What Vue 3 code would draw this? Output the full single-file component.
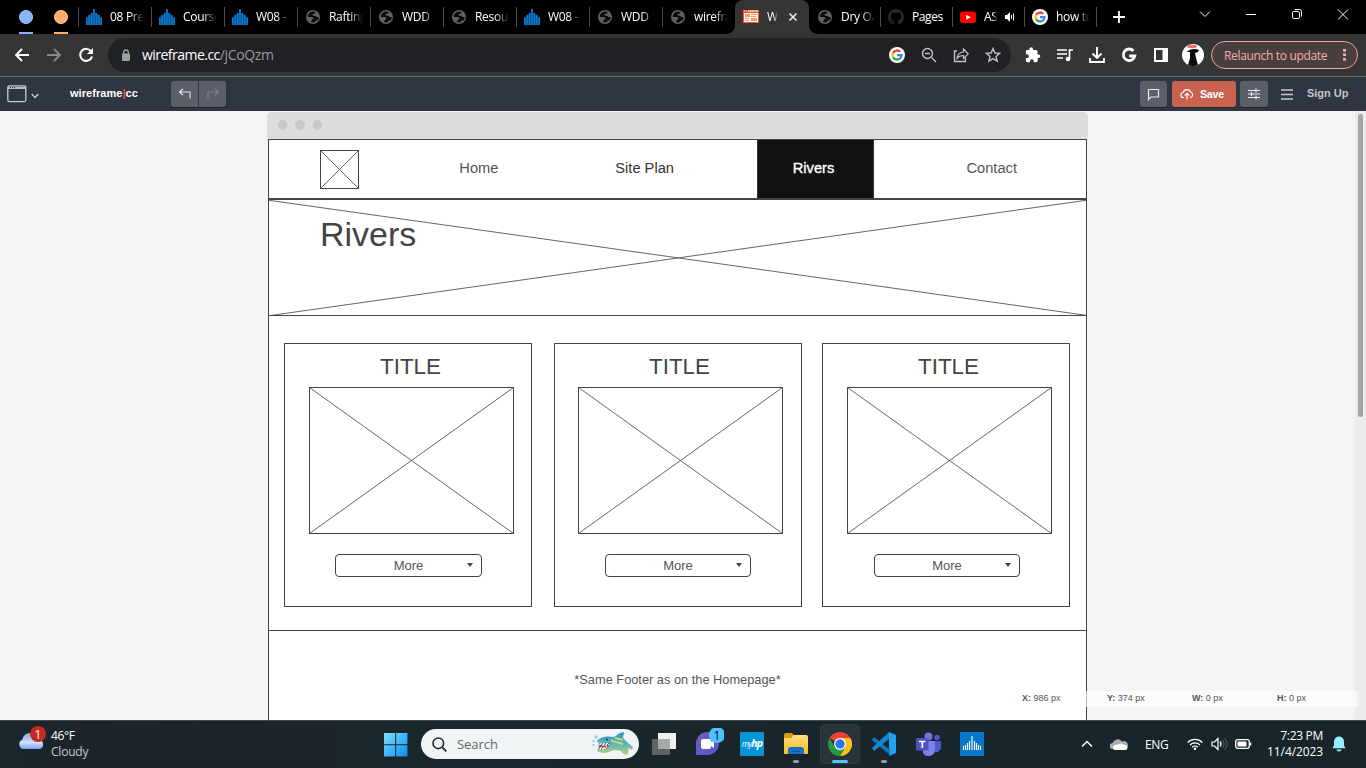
<script setup>
const tabs = [
  { icon: 'bars', text: '08 Prep', w: 73 },
  { icon: 'bars', text: 'Course', w: 73 },
  { icon: 'bars', text: 'W08 - T', w: 73 },
  { icon: 'globe', text: 'Rafting', w: 73 },
  { icon: 'globe', text: 'WDD 1', w: 73 },
  { icon: 'globe', text: 'Resour', w: 73 },
  { icon: 'bars', text: 'W08 - T', w: 73 },
  { icon: 'globe', text: 'WDD 1', w: 73 },
  { icon: 'globe', text: 'wirefra', w: 73 },
  { icon: 'wire', text: 'Wi', w: 74, active: true },
  { icon: 'globe', text: 'Dry Oa', w: 71, first: true },
  { icon: 'github', text: 'Pages', w: 72 },
  { icon: 'youtube', text: 'ASM', w: 72, audio: true },
  { icon: 'google', text: 'how to', w: 72 },
]
const cards = [
  { cls: 'c1' },
  { cls: 'c2' },
  { cls: 'c3' },
]
const readout = [
  ['X:', '986 px'],
  ['Y:', '374 px'],
  ['W:', '0 px'],
  ['H:', '0 px'],
]
</script>

<template>
  <div class="screen">
    <svg class="defs" width="0" height="0">
      <symbol id="google" viewBox="0 0 16 16">
        <circle cx="8" cy="8" r="8" fill="#fff" />
        <g fill="none" stroke-width="2.3">
          <path d="M4.1 5.8A4.5 4.5 0 0 1 11.2 4.8" stroke="#ea4335" />
          <path d="M4.1 10.2a4.5 4.5 0 0 1 0-4.4" stroke="#fbbc05" />
          <path d="M11 11.4a4.5 4.5 0 0 1-6.9-1.2" stroke="#34a853" />
          <path d="M8 8.2h4.5a4.6 4.6 0 0 1-1.6 3.3" stroke="#4285f4" />
        </g>
      </symbol>
      <symbol id="globe" viewBox="0 0 16 16">
        <circle cx="8" cy="8" r="7" fill="#5f6368" />
        <path d="M8.6 2.4c-2.3-.2-4.4 1.1-5.3 3.1-.4.9-.5 1.7-.4 2.6h3.6c1.3 0 2 .9 2 2H7.200v1.300H5.500c.4 1.300 1.400 2 2.600 2.100 1.500 0 2.400-.8 2.700-1.900l1.800-.1c.8-1 1.100-2.200 1-3.500h-2.200l-1.200-1.300H7.800V4.800h1.700c.6 0 .9-.4.9-1V2.900z" fill="#0a0a0a" />
        <path d="M4.2 9.500 6.300 11.600" stroke="#5f6368" />
      </symbol>
      <symbol id="bars" viewBox="0 0 16 16">
        <path d="M0 16V8.500h1.500V7H3V5.500h2V4h2V0h2v4h2v1.500h2V7h1.500v1.500H16V16z" fill="#064b80" />
        <path d="M.7 16V8.500M3.100 16V6M5.600 16V4M8 16V0M10.400 16V4M12.900 16V6M15.300 16V8.500" stroke="#0a7bd0" stroke-width="1.500" />
      </symbol>
    </svg>

    <!-- tab strip -->
    <div class="tabstrip">
      <div class="pinned"><i class="blue"></i><i class="orange"></i></div>
      <div v-for="(t, i) in tabs" :key="i" class="tab" :class="{ active: t.active, first: t.first }" :style="{ width: t.w + 'px' }">
        <svg v-if="t.icon === 'bars'" width="16" height="16"><use href="#bars" /></svg>
        <svg v-else-if="t.icon === 'globe'" width="16" height="16"><use href="#globe" /></svg>
        <svg v-else-if="t.icon === 'google'" width="16" height="16"><use href="#google" /></svg>
        <svg v-else-if="t.icon === 'wire'" width="16" height="16" viewBox="0 0 16 16">
          <path d="M0 1h16v13H0z" fill="#f4581f" />
          <path d="M1 2h1M3 2h1M5 2h10" stroke="#fff" />
          <path d="M1 4h14v9H1z" fill="#fff3ec" />
          <path d="M2 5h5v3H2zM8 5h6v1H8zM8 7h5v1H8zM2 9h4v1H2zM2 11h4v1H2zM8 9h6v3H8z" fill="#f79b75" />
        </svg>
        <svg v-else-if="t.icon === 'github'" width="16" height="16" viewBox="0 0 16 16">
          <path fill="#24292f" d="M8 0C3.580 0 0 3.580 0 8c0 3.540 2.290 6.530 5.470 7.590.4.070.55-.17.55-.38v-1.490c-2.010.37-2.530-.49-2.690-.94-.09-.23-.48-.94-.82-1.130-.28-.15-.68-.52-.01-.53.63-.01 1.080.58 1.230.82.72 1.210 1.870.87 2.330.66.070-.52.280-.87.510-1.070-1.780-.2-3.640-.89-3.640-3.950 0-.87.310-1.590.82-2.150-.08-.2-.36-1.020.08-2.120 0 0 .67-.21 2.200.82a7.600 7.600 0 0 1 4 0c1.530-1.040 2.200-.82 2.200-.82.44 1.100.16 1.920.08 2.120.51.56.82 1.270.82 2.150 0 3.070-1.870 3.750-3.650 3.950.29.25.54.73.54 1.480v2.200c0 .21.15.46.55.38A8 8 0 0 0 16 8c0-4.420-3.580-8-8-8z" />
        </svg>
        <svg v-else width="16" height="16" viewBox="0 0 16 16">
          <rect y="2.500" width="16" height="11.500" rx="3" fill="#f00" /><path d="m6.200 5.800 4.600 2.500-4.600 2.500z" fill="#fff" />
        </svg>
        <span class="tabtext">{{ t.text }}</span>
        <svg v-if="t.active" class="close" width="10" height="10" viewBox="0 0 10 10"><path d="m1.500 1.500 7 7m0-7-7 7" stroke="#e8eaed" stroke-width="1.600" /></svg>
        <svg v-if="t.audio" class="audio" width="12" height="12" viewBox="0 0 12 12"><path d="M1 4h2l3-3v10L3 8H1z" fill="#fff" /><path d="M7.500 4v4M9.500 2.500v7" stroke="#eee" fill="none" /></svg>
      </div>
      <svg class="plus" width="14" height="14" viewBox="0 0 14 14"><path d="M7 1v12M1 7h12" stroke="#fff" stroke-width="1.800" /></svg>
      <div class="winctl">
        <svg width="46" height="28" viewBox="0 0 46 28"><path d="m18 11.500 5 5 5-5" /></svg>
        <svg width="46" height="28" viewBox="0 0 46 28"><path d="M18 14.500h10" /></svg>
        <svg width="46" height="28" viewBox="0 0 46 28"><rect x="18.500" y="11.500" width="7" height="7" rx="1.300" /><path d="M20.500 9.500h5a2 2 0 0 1 2 2v5" /></svg>
        <svg width="46" height="28" viewBox="0 0 46 28"><path d="m18 9.500 10 10m0-10-10 10" /></svg>
      </div>
    </div>

    <!-- browser toolbar -->
    <div class="toolbar">
      <div class="navbtns">
        <svg width="32" height="32" viewBox="0 0 32 32"><path d="M23 16H10m6-6-6 6 6 6" stroke="#fff" stroke-width="1.900" fill="none" /></svg>
        <svg width="32" height="32" viewBox="0 0 32 32"><path d="M9 16h13m-6-6 6 6-6 6" stroke="#8a8a8a" stroke-width="1.800" fill="none" /></svg>
        <svg width="32" height="32" viewBox="0 0 32 32"><path d="M21.200 12.500A6 6 0 1 0 22 17.500" stroke="#fff" stroke-width="2" fill="none" /><path d="M23 9v6h-6z" fill="#fff" /></svg>
      </div>
      <div class="omnibox">
        <svg class="lock" width="10" height="13" viewBox="0 0 10 13"><rect x="1" y="4.500" width="8" height="7.500" rx="1" fill="#9aa0a6" /><path d="M2.700 5V3.300a2.300 2.300 0 0 1 4.600 0V5" fill="none" stroke="#9aa0a6" stroke-width="1.300" /></svg>
        <span class="url">wireframe.cc<em>/jCoQzm</em></span>
        <svg width="32" height="32" viewBox="0 0 32 32"><use href="#google" x="8" y="8" width="16" height="16" /></svg>
        <svg class="thin" width="32" height="32" viewBox="0 0 32 32"><circle cx="14.500" cy="14.500" r="5" /><path d="m18.500 18.500 4.500 4.500M12 14.500h5" /></svg>
        <svg class="thin" width="32" height="32" viewBox="0 0 32 32"><path d="M12 12H9.500v10.500h11v-4" /><path d="M18.500 10v3c-4 .2-6 2.500-6.500 6.500 1.700-2.200 3.500-3 6.500-3v3l4.700-4.700z" stroke-width="1.200" /></svg>
        <svg class="thin" width="32" height="32" viewBox="0 0 32 32"><path d="m16 9.600 1.900 4.400 4.700.4-3.600 3.100 1.100 4.600-4.100-2.500-4.100 2.500 1.100-4.600-3.600-3.100 4.700-.4z" /></svg>
      </div>
      <div class="exts">
        <svg width="32" height="32" viewBox="0 0 32 32"><path fill="#fff" d="M21.500 15.500h-1V12.500c0-.8-.6-1.400-1.400-1.400H16v-1a1.800 1.800 0 0 0-3.600 0v1H10.300c-.8 0-1.400.6-1.400 1.400v2.800h1a1.900 1.900 0 0 1 0 3.800h-1v2.700c0 .8.600 1.400 1.400 1.400H13v-1a1.900 1.900 0 0 1 3.800 0v1h2.500c.8 0 1.400-.6 1.400-1.400v-2.700h.8a1.800 1.800 0 0 0 0-3.600z" /></svg>
        <svg width="32" height="32" viewBox="0 0 32 32"><path d="M8 11h10M8 15h10M8 19h6M20.500 20V11H24" stroke="#fff" stroke-width="1.700" fill="none" /><circle cx="19" cy="20" r="2.300" fill="#fff" /></svg>
        <svg width="32" height="32" viewBox="0 0 32 32"><path d="M16 8v11m-4.500-4.500L16 19l4.500-4.500M9 19v4h14v-4" stroke="#fff" stroke-width="1.900" fill="none" /></svg>
        <svg width="32" height="32" viewBox="0 0 32 32"><path d="M20.500 12A5.800 5.800 0 1 0 21.800 17H16.200" stroke="#fff" stroke-width="2.800" fill="none" /></svg>
        <svg width="32" height="32" viewBox="0 0 32 32"><path d="M9 9h14v14H9zM11 11v10h6.500V11z" fill="#fff" fill-rule="evenodd" /></svg>
        <svg width="32" height="32" viewBox="0 0 32 32"><circle cx="16" cy="16" r="11" fill="#fff" /><ellipse cx="15" cy="7.500" rx="5" ry="1.700" fill="#df7171" /><path d="M10 13c2-3 8-4 12-2l-1 2-3 1 1 5 2 7c-3 1.500-7 1.500-10 0l2-7V13z" fill="#080a0c" /></svg>
      </div>
      <div class="relaunch"><span>Relaunch to update</span><b></b></div>
    </div>

    <!-- application bar -->
    <div class="appbar">
      <svg class="winicon" width="20" height="18" viewBox="0 0 20 18"><rect x=".8" y=".8" width="18" height="15.800" rx="1.500" fill="none" stroke="#c9ccd0" stroke-width="1.300" /><path d="M1 3h18" stroke="#b9bcc1" stroke-width="2" /><path d="M3 2.500h1m1 0h1m1 0h1" stroke="#3b4049" /></svg>
      <svg class="chev" width="8" height="6" viewBox="0 0 8 6"><path d="m.7 1 3.300 3.500L7.300 1" fill="none" stroke="#c9ccd0" stroke-width="1.300" /></svg>
      <div class="brand">wireframe<i>|</i>cc</div>
      <div class="btn undo"><svg width="14" height="12" viewBox="0 0 14 12"><path d="M5 1 1.500 4 5 7M1.500 4H12v6.500" fill="none" stroke="#e4e5e7" stroke-width="1.200" /></svg></div>
      <div class="btn redo"><svg width="14" height="12" viewBox="0 0 14 12"><path d="m9 1 3.500 3L9 7M12.500 4H2v6.500" fill="none" stroke="#7d828b" stroke-width="1.200" /></svg></div>
      <div class="btn comment"><svg width="13" height="13" viewBox="0 0 13 13"><path d="M1.500 11.500v-10h10v7.500H4z" fill="none" stroke="#e8e8e8" stroke-width="1.200" /></svg></div>
      <div class="btn save"><svg width="14" height="12" viewBox="0 0 14 12"><path d="M4 9.500H3.500a2.500 2.500 0 0 1-.3-5 4 4 0 0 1 7.600-.2 2.700 2.700 0 0 1-.3 5.200H10M7 11.500V5.500m-2.200 2L7 5.300l2.200 2.200" fill="none" stroke="#fff" stroke-width="1.100" /></svg><span>Save</span></div>
      <div class="btn tune"><svg width="12" height="12" viewBox="0 0 12 12"><path d="M0 2.500h12M0 6h12M0 9.500h12M8 .5v4M3.500 4v4M8 7.500v4" stroke="#eee" stroke-width="1.200" /></svg></div>
      <svg class="menu" width="12" height="11" viewBox="0 0 12 11"><path d="M0 1h12M0 5.500h12M0 10h12" stroke="#c9ccd0" stroke-width="1.300" /></svg>
      <span class="signup">Sign Up</span>
    </div>

    <!-- canvas -->
    <div class="canvas">
      <div class="frame">
        <div class="frametop"><i></i><i></i><i></i></div>
        <div class="page">
          <div class="sitenav">
            <svg class="logo" width="39" height="39" viewBox="0 0 39 39"><rect x=".5" y=".5" width="38" height="38" /><path d="m.5.5 38 38m0-38-38 38" /></svg>
            <span class="n1">Home</span>
            <span class="n2">Site Plan</span>
            <span class="n3">Rivers</span>
            <span class="n4">Contact</span>
          </div>
          <div class="hero">
            <svg width="817" height="115" viewBox="0 0 817 115" class="cross"><path d="M0 .3 817 115.300M0 115.700 817 .3" /></svg>
            <h1>Rivers</h1>
          </div>
          <div class="cards">
            <div v-for="c in cards" :key="c.cls" class="card" :class="c.cls">
              <h2>TITLE</h2>
              <svg width="205" height="147" viewBox="0 0 205 147"><rect x=".5" y=".5" width="204" height="146" /><path d="m.5.5 204 146m0-146-204 146" /></svg>
              <div class="more">More<i></i></div>
            </div>
          </div>
          <div class="footer">*Same Footer as on the Homepage*</div>
        </div>
      </div>
      <div class="track"><div class="thumb"></div></div>
      <div class="readout"><span v-for="r in readout" :key="r[0]"><b>{{ r[0] }}</b> {{ r[1] }}</span></div>
    </div>

    <!-- taskbar -->
    <div class="taskbar">
      <div class="weather">
        <svg width="30" height="30" viewBox="0 0 30 30">
          <defs><linearGradient id="cl" x2="0" y2="1"><stop stop-color="#7ea7e8" /><stop offset=".6" stop-color="#d0e1fb" /><stop offset="1" stop-color="#7aa4ee" /></linearGradient></defs>
          <path d="M5 24a5 5 0 0 1-.5-9.500 7.500 7.500 0 0 1 13-4 7 7 0 0 1 4 4.500 4.600 4.600 0 0 1 0 9z" fill="url(#cl)" />
          <circle cx="20" cy="9" r="8" fill="#c42b1c" />
          <text x="20" y="13.500" text-anchor="middle" font-size="12" fill="#fff">1</text>
        </svg>
        <div class="wtext"><div>46°F</div><div class="dim">Cloudy</div></div>
      </div>
      <svg class="start" width="24" height="24" viewBox="0 0 24 24">
        <defs><linearGradient id="win" x2="1" y2="1"><stop stop-color="#7fe0ff" /><stop offset="1" stop-color="#078cf5" /></linearGradient></defs>
        <path d="M0 0h11.200v11.200H0zM12.200 0h11.200v11.200H12.200zM0 12.200h11.200v11.200H0zM12.200 12.200h11.200v11.200H12.200z" fill="url(#win)" />
      </svg>
      <div class="search">
        <svg width="15" height="15" viewBox="0 0 15 15"><circle cx="6.300" cy="6.300" r="5.300" fill="none" stroke="#252a2e" stroke-width="1.600" /><path d="m10.300 10.300 4 4" stroke="#252a2e" stroke-width="1.900" /></svg>
        <span>Search</span>
        <svg class="fish" width="42" height="24" viewBox="0 0 42 24">
          <defs><linearGradient id="fi" x2="0" y2="1"><stop stop-color="#2e94b5" /><stop offset=".5" stop-color="#55b5bb" /><stop offset="1" stop-color="#c5cf75" /></linearGradient></defs>
          <path d="M5 9c4-5 11-5 17-4l6-4 4-1-1 6c2 2 3 3 4 4 2 2 4 3 6 5l-1 3-4-2c1 3 0 5-1 7-2-1-5-1-6-4l-7-1c-6 3-10 4-15 2l-2-1 2-6z" fill="url(#fi)" />
          <path d="M6 10c3 2 8 2 12 1-1 5-6 8-10 6z" fill="#8a4579" />
          <path d="m6 10 2 3 1-2 2 3 1-3 2 3 1-3 2 2M8 18l1-3 2 3 1-3 1 2 2-3" fill="none" stroke="#fff4d8" />
          <path d="M19 8c4 3 8 2 12 4M23 6l8 2" stroke="#c8d772" stroke-width="2" fill="none" />
          <circle cx="15" cy="7.500" r="1" fill="#173b61" /><circle cx="4" cy="5" r="1.800" fill="#9ad6df" /><circle cx="1.500" cy="9" r="1" fill="#79c7db" /><circle cx="1.500" cy="13" r="1" fill="#79c7db" />
        </svg>
      </div>
      <div class="apps">
        <div class="app"><svg width="24" height="24" viewBox="0 0 24 24"><path d="M6 1h18v16H6z" fill="#f0f0f0" /><path d="M0 7h18v16H0z" fill="#606263" /><path d="M6 7h12v10H6z" fill="#a8a9aa" /></svg></div>
        <div class="app"><svg width="32" height="32" viewBox="0 0 32 32"><defs><linearGradient id="ch" x2="1" y2="1"><stop stop-color="#775ab8" /><stop offset="1" stop-color="#5358c7" /></linearGradient></defs><path d="M4 27V16a11.500 11.500 0 1 1 11.500 11z" fill="url(#ch)" /><rect x="9" y="11" width="10" height="10" rx="2" fill="#fff" /><path d="m19 14 3-2v8l-3-2z" fill="#fff" /><circle cx="25" cy="7" r="8" fill="#4cc2ff" /><text x="25" y="11.500" text-anchor="middle" font-size="12" fill="#112">1</text></svg></div>
        <div class="app"><div class="hp">my<b>hp</b></div></div>
        <div class="app"><svg width="24" height="24" viewBox="0 0 24 24"><defs><linearGradient id="fo" x2="0" y2="1"><stop stop-color="#ffe07a" /><stop offset="1" stop-color="#f9bd23" /></linearGradient></defs><path d="M0 3a2 2 0 0 1 2-2h6l3 3v5H0z" fill="#d99a0c" /><path d="M0 6h7l3-3h12a2 2 0 0 1 2 2v17H0z" fill="url(#fo)" /><path d="M4 22v-4a3 3 0 0 1 3-3h10a3 3 0 0 1 3 3v4z" fill="#1473c8" /><path d="M8 19h8v1H8z" fill="#09549b" /></svg><u></u></div>
        <div class="app on"><svg width="24" height="24" viewBox="0 0 24 24"><path d="M12 12 1.600 6A12 12 0 0 1 22.400 6z" fill="#ea4335" /><path d="M12 12V6h10.400A12 12 0 0 1 12 24l5.200-9z" fill="#fbc116" /><path d="M12 24A12 12 0 0 1 1.600 6l5.200 9 5.200 3 5.200-3z" fill="#279a48" /><circle cx="12" cy="12" r="6" fill="#fff" /><circle cx="12" cy="12" r="4.700" fill="#2577ef" /></svg><u></u></div>
        <div class="app"><svg width="24" height="24" viewBox="0 0 24 24"><path d="m17 0 7 3v18l-7 3z" fill="#23a2ef" /><path d="m2 5 16 13v5L0 8z" fill="#087abd" /><path d="m0 16 17-16v7L2 19z" fill="#1287cf" /></svg><u></u></div>
        <div class="app"><svg width="26" height="24" viewBox="0 0 26 24"><circle cx="13.500" cy="4.500" r="4" fill="#7176dc" /><circle cx="22" cy="5.500" r="2.800" fill="#5059c9" /><path d="M17 9h9v7a5 5 0 0 1-6 4z" fill="#5059c9" /><path d="M8 9h12v8a6.500 6.500 0 0 1-12 4z" fill="#7b83eb" /><rect x="1" y="6" width="12.500" height="12.500" rx="1" fill="#4b53bc" /><path d="M4 9.500h6.500M7.300 9v7" stroke="#fff" stroke-width="1.700" /></svg></div>
        <div class="app"><svg width="24" height="24" viewBox="0 0 24 24"><path d="M0 0h24v24H0z" fill="#0876c9" /><path d="M3.500 18v-4M5.500 18v-5M7.500 18v-7M9.500 18v-9M12 18V4M14.500 18v-9M16.500 18v-7M18.500 18v-5M20.500 18v-4" stroke="#fff" stroke-width="1.150" /></svg></div>
      </div>
      <div class="tray">
        <svg class="up" width="12" height="8" viewBox="0 0 12 8"><path d="m1 6.500 5-5 5 5" fill="none" stroke="#fff" stroke-width="1.500" /></svg>
        <svg class="cloud" width="18" height="11" viewBox="0 0 18 11"><path d="M3 10a3 3 0 0 1-.5-6A5.500 5.500 0 0 1 12 2.500 4 4 0 0 1 15.500 10z" fill="#a9adb0" /><path d="M4 11a3 3 0 0 1 1-5l6-1.500 4 1.500a2.500 2.500 0 0 1 0 5z" fill="#fff" /></svg>
        <span class="eng">ENG</span>
        <svg class="wifi" width="16" height="12" viewBox="0 0 16 12"><g fill="none" stroke="#fff" stroke-width="1.200"><path d="M.7 4.500a10.300 10.300 0 0 1 14.600 0M3 7a7 7 0 0 1 10 0M5.200 9.200a4 4 0 0 1 5.600 0" /></g><circle cx="8" cy="10.700" r="1.300" fill="#fff" /></svg>
        <svg class="vol" width="17" height="14" viewBox="0 0 17 14"><path d="M1 5h2.500L7 1.500v11L3.500 9H1z" fill="none" stroke="#fff" stroke-width="1.200" /><path d="M9 4.500c1.300 1.500 1.300 3.500 0 5" stroke="#fff" stroke-width="1.200" fill="none" /><path d="M11.500 3c2 2.500 2 5.500 0 8M13.700 1.500c3 3.500 3 7.500 0 11" stroke="#5d686e" fill="none" /></svg>
        <svg class="bat" width="17" height="10" viewBox="0 0 17 10"><rect x=".7" y=".7" width="13.600" height="8.600" rx="2" fill="none" stroke="#fff" stroke-width="1.300" /><rect x="2.500" y="2.500" width="9" height="5" rx=".6" fill="#fff" /><path d="M15.500 3.500v3" stroke="#fff" stroke-width="1.500" /></svg>
        <div class="clock"><div>7:23 PM</div><div class="date">11/4/2023</div></div>
        <svg class="bell" width="14" height="16" viewBox="0 0 14 16"><path d="M7 .5a5 5 0 0 1 5 5v4l1.700 2.700H.3L2 9.500v-4a5 5 0 0 1 5-5zM4.500 13.500h5a2.500 2 0 0 1-5 0z" fill="#99ebff" /></svg>
      </div>
    </div>
  </div>
</template>

<style>
body { margin: 0; overflow: hidden; }
</style>

<style scoped>
.screen { width: 1366px; height: 768px; display: flex; flex-direction: column; overflow: hidden; font-family: "Open Sans", "Noto Sans", sans-serif; }
.screen * { box-sizing: border-box; }
svg { display: block; flex: none; }
.defs { position: absolute; }
.tabstrip { height: 34px; display: flex; flex: none; background: linear-gradient(#4a4a4a, #4a4a4a) 1096px 7px / 1px 20px no-repeat #000; }
.pinned { width: 78px; display: flex; padding-left: 19px; gap: 21px; padding-top: 10px; flex: none; }
.pinned i { width: 14px; height: 24px; background: radial-gradient(circle at 7px 7px, #8ab4f8 6.700px, transparent 7.200px), linear-gradient(#8ab4f8, #8ab4f8) 0 22px / 14px 2px no-repeat; }
.pinned .orange { background: radial-gradient(circle at 7px 7px, #fcad70 6.700px, transparent 7.200px), linear-gradient(#fcad70, #fcad70) 0 22px / 14px 2px no-repeat; }
.tab { height: 34px; display: flex; align-items: center; padding-left: 8px; flex: none; background: linear-gradient(#4a4a4a, #4a4a4a) 0 7px / 1px 20px no-repeat; }
.tab.active { background: #353535; border-radius: 8px 8px 0 0; position: relative; }
.tab.active::before, .tab.active::after { content: ""; position: absolute; bottom: 0; width: 8px; height: 8px; left: -8px; background: radial-gradient(circle at 0 0, transparent 7.500px, #353535 8px); }
.tab.active::after { left: auto; right: -8px; background: radial-gradient(circle at 100% 0, transparent 7.500px, #353535 8px); }
.tab.first { background: none; }
.tabtext { margin-left: 8px; width: 34px; overflow: hidden; white-space: nowrap; color: #fff; font-size: 12px; letter-spacing: -.3px; line-height: 20px; -webkit-mask-image: linear-gradient(90deg, #000 60%, transparent 100%); mask-image: linear-gradient(90deg, #000 60%, transparent 100%); }
.tab:nth-child(13) .tabtext { -webkit-mask-image: none; mask-image: none; letter-spacing: -.4px; }
.tab.active .tabtext { width: 11px; }
.tab:nth-child(14) .tabtext { width: 14px; }
.close { margin-left: 10px; }
.audio { margin-left: 6px; }
.plus { margin: 10px 0 0 16px; }
.winctl { display: flex; margin-left: auto; }
.winctl svg { fill: none; stroke: #fff; stroke-width: 1; }

.toolbar { height: 43px; background: #353535; border-bottom: 1px solid #6a6a6a; display: flex; flex: none; align-items: center; }
.navbtns, .exts { display: flex; }
.navbtns { margin-left: 6px; }
.omnibox { width: 903px; height: 34px; border-radius: 17px; background: #202124; margin-left: 6px; display: flex; align-items: center; padding-right: 2px; }
.lock { margin-left: 13px; }
.url { margin-left: 11px; margin-right: auto; color: #fff; font-size: 14px; letter-spacing: -.53px; line-height: 20px; }
.url em { font-style: normal; color: #9a9b9d; letter-spacing: -.35px; }
.thin { fill: none; stroke: #bfc1c4; stroke-width: 1.400; }
.exts { margin-left: 6px; }
.relaunch { width: 147px; height: 28px; border: 1px solid #f2a49d; border-radius: 14px; background: #493f3f; margin-left: 2px; display: flex; align-items: center; color: #f6aea9; font-size: 12px; padding-left: 12px; letter-spacing: -.33px; white-space: nowrap; }
.relaunch b { margin-left: auto; margin-right: 11px; width: 3px; height: 13.500px; background: radial-gradient(circle, #f6aea9 1.300px, transparent 1.700px) 0 0 / 3px 4.500px; }

.appbar { height: 34px; background: #2f3542; display: flex; flex: none; align-items: center; font-family: "Liberation Sans", Arial, sans-serif; font-weight: bold; font-size: 11px; color: #fff; }
.winicon { margin-left: 7px; }
.chev { margin: 3px 0 0 4px; }
.brand { margin: -2px 0 0 31px; width: 101px; letter-spacing: .05px; }
.brand i { color: #ff4b43; font-style: normal; }
.btn { height: 26px; background: #5b5f69; border-radius: 3px; display: flex; align-items: center; justify-content: center; box-shadow: 0 1px #20242d; }
.undo { width: 27px; border-radius: 3px 0 0 3px; }
.redo { width: 27px; margin-left: 1px; border-radius: 0 3px 3px 0; }
.comment { width: 27px; margin-left: 914px; }
.save { width: 64px; margin-left: 5px; background: #c86350; gap: 6px; font-size: 10.700px; padding-right: 4px; }
.save span { letter-spacing: -.2px; }
.tune { width: 28px; margin-left: 4px; }
.menu { margin-left: 13px; }
.signup { margin: -2px 0 0 14px; font-size: 11px; letter-spacing: -.02px; color: #c3c6ca; }

.canvas { flex: 1; min-height: 0; background: #f4f4f4; display: flex; position: relative; font-family: "Liberation Sans", Arial, sans-serif; color: #444; }
.frame { width: 821px; margin-left: 267px; padding-top: 1px; flex: none; }
.frametop { height: 27px; background: #ddd; border-radius: 5px 5px 0 0; display: flex; padding: 8px 0 0 11px; gap: 8px; }
.frametop i { width: 9.400px; height: 10px; border-radius: 50%; background: #c9c9c9; }
.page { width: 819px; margin-left: 1px; height: 581px; background: #fff; border: 1px solid #444; border-bottom: 0; overflow: hidden; }
.page svg { fill: none; stroke: #444; stroke-width: 1; }
.page svg path { stroke: #555; stroke-width: .9; }
.sitenav { height: 60px; border-bottom: 2px solid #444; display: flex; font-size: 14.660px; line-height: 56px; color: #555; white-space: nowrap; }
.page .logo { margin: 10px 0 0 51px; }
.n1 { margin-left: 100.300px; width: 156px; }
.n2 { width: 141.700px; color: #333; }
.n3 { width: 117px; background: #111; border: 1px solid #333; border-width: 0 1px; color: #fff; text-align: center; padding-right: 4px; -webkit-text-stroke: .35px #fff; }
.n4 { margin-left: 92.500px; }
.hero { height: 116px; border-bottom: 1px solid #444; display: grid; }
.hero > * { grid-area: 1 / 1; }
h1, h2 { margin: 0; font-weight: normal; }
h1 { font-size: 34px; line-height: 40px; padding: 14px 0 0 51px; }
.cards { height: 315px; border-bottom: 1px solid #444; padding: 27px 0 0 15px; display: flex; }
.card { width: 248px; height: 264px; border: 1px solid #444; padding-left: 24px; }
.card h2 { font-size: 22.400px; line-height: 28px; height: 43px; padding-top: 9px; width: 203px; text-align: center; }
.more { margin: 20px 0 0 25px; width: 147px; height: 23px; border: 1px solid #444; border-radius: 4px; font-size: 13px; line-height: 22px; text-align: center; position: relative; color: #555; }
.more i { position: absolute; right: 8px; top: 8px; border: 3px solid transparent; border-top: 4px solid #444; border-bottom: 0; }
.c1 .more { margin-left: 25px; }
.c2 { margin-left: 22px; padding-left: 23px; }
.c2 .more, .c3 .more { width: 146px; margin-left: 27px; }
.c1 .more { margin-left: 26px; }
.c3 { margin-left: 20px; }
.footer { text-align: center; font-size: 12.800px; line-height: 16px; padding-top: 41px; color: #555; }
.track { width: 11px; margin-left: auto; background: #ececec; padding: 3px 3px 0; }
.thumb { height: 303px; width: 5px; border-radius: 3px; background: #a5a5a5; }
.readout { position: absolute; left: 1011px; top: 580px; width: 347px; height: 16px; background: rgba(255, 255, 255, .6); display: flex; padding-left: 11px; font-size: 9px; line-height: 14px; color: #555; }
.readout span { width: 85px; flex: none; }
.readout span:last-child { width: 80px; }

.taskbar { height: 48px; flex: none; border-top: 1px solid #464b4e; background: linear-gradient(90deg, #1a252c, #1d232b 18%, #19272d 32%, #18262c 70%, #172429); display: flex; color: #fff; font-size: 12px; }
.weather { display: flex; width: 384px; padding-left: 18px; flex: none; }
.weather svg { margin-top: 4px; }
.wtext { margin: 7px 0 0 3px; line-height: 16px; letter-spacing: -.4px; }
.dim { color: #c5c9cc; letter-spacing: -.2px; }
.start { margin-top: 12px; }
.search { width: 218px; height: 30px; margin: 8px 0 0 13px; border-radius: 15px; background: #f1f4f4; display: flex; align-items: center; padding-left: 11px; color: #62676a; font-size: 13px; flex: none; }
.search span { margin-left: 10px; letter-spacing: -.05px; }
.fish { margin-left: auto; margin-right: 5px; }
.apps { display: flex; gap: 4px; margin-left: 5px; padding-top: 3px; }
.app { width: 40px; height: 40px; border-radius: 4px; display: flex; align-items: center; justify-content: center; position: relative; }
.app.on { background: #29333b; border: 1px solid #303b42; }
.app u { position: absolute; bottom: 1px; left: 17px; width: 6px; height: 3px; border-radius: 2px; background: #999d9f; }
.app.on u { left: 11px; width: 16px; bottom: 0; background: #4cc2ff; }
.hp { width: 24px; height: 24px; background: #0096d6; border-radius: 1px; font-size: 8.500px; line-height: 22px; font-style: italic; letter-spacing: -.9px; text-align: center; }
.hp b { font-size: 10.500px; }
.tray { display: flex; align-items: center; margin-left: 89px; flex: none; padding-bottom: 1px; }
.cloud { margin-left: 17px; }
.eng { margin-left: 17px; width: 42px; letter-spacing: -.3px; }
.vol { margin-left: 8px; }
.bat { margin-left: 7px; }
.clock { width: 71px; text-align: right; line-height: 16px; letter-spacing: -.3px; }
.date { letter-spacing: -.1px; }
.bell { margin-left: 9px; }
</style>
